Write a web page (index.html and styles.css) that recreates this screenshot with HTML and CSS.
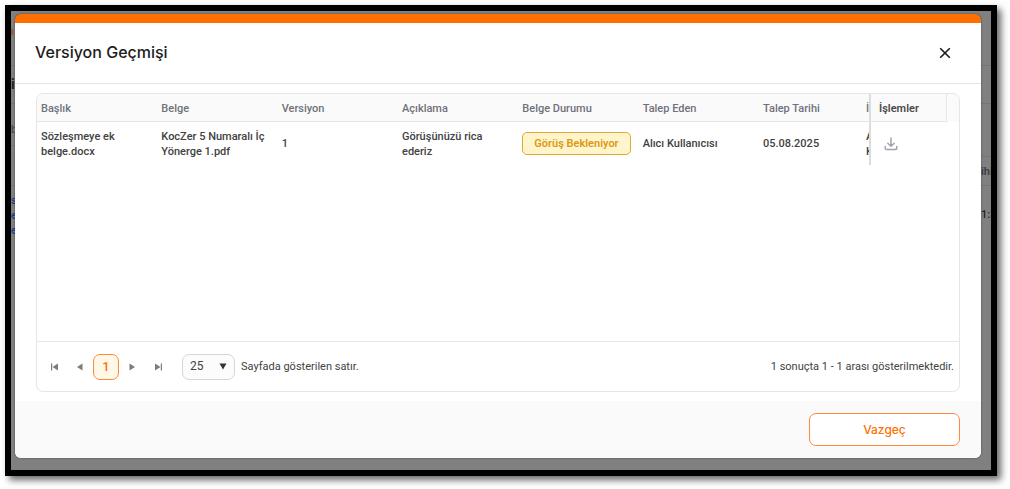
FILE: index.html
```html
<!DOCTYPE html>
<html lang="tr">
<head>
<meta charset="utf-8">
<title>Versiyon Geçmişi</title>
<link rel="stylesheet" href="styles.css">
</head>
<body>
<div class="frame">
  <div class="backdrop backdrop-left" aria-hidden="true">
    <span class="scrap brand">ı</span>
    <span class="scrap heading">i</span>
    <span class="scrap label">b</span>
    <span class="scrap links">s<br>e<br>e</span>
  </div>
  <div class="backdrop backdrop-right" aria-hidden="true">
    <span class="scrap column">ihi</span>
    <span class="scrap time">1:3</span>
  </div>
  <section class="modal" role="dialog" aria-labelledby="title">
    <header class="modal-head">
      <h1 id="title">Versiyon Geçmişi</h1>
      <button class="close" type="button" aria-label="Kapat">
        <svg width="12" height="12" viewBox="0 0 12 12"><path d="M1.2 1.2l9.6 9.6M10.8 1.2l-9.6 9.6" fill="none" stroke="currentColor" stroke-width="1.6"/></svg>
      </button>
    </header>
    <div class="modal-body">
      <div class="grid">
        <div class="grid-rows">
          <table>
            <colgroup>
              <col><col><col><col><col><col>
              <col class="col-date"><col class="col-cut"><col class="col-actions"><col class="col-fill">
            </colgroup>
            <thead>
              <tr>
                <th>Başlık</th><th>Belge</th><th>Versiyon</th><th>Açıklama</th><th>Belge Durumu</th><th>Talep Eden</th><th>Talep Tarihi</th>
                <th class="cut">İ</th><th class="actions">İşlemler</th><th class="fill"></th>
              </tr>
            </thead>
            <tbody>
              <tr>
                <td>Sözleşmeye ek belge.docx</td>
                <td>KocZer 5 Numaralı İç Yönerge 1.pdf</td>
                <td>1</td>
                <td>Görüşünüzü rica ederiz</td>
                <td><span class="badge">Görüş Bekleniyor</span></td>
                <td>Alıcı Kullanıcısı</td>
                <td>05.08.2025</td>
                <td class="cut">A<br>K</td>
                <td class="actions">
                  <button class="download" type="button" aria-label="İndir">
                    <svg width="14" height="14" viewBox="0 0 14 14" fill="none" stroke="currentColor" stroke-width="1.5" stroke-linecap="round" stroke-linejoin="round"><path d="M7 1v8M3.8 6.2L7 9.2l3.200-3M1.200 9.500v1.500q0 1.500 1.500 1.500h8.600q1.500 0 1.500-1.500V9.500"/></svg>
                  </button>
                </td>
                <td></td>
              </tr>
            </tbody>
          </table>
        </div>
        <div class="pager">
          <nav class="pages" aria-label="Sayfalar">
            <button type="button" aria-label="İlk sayfa"><svg width="7" height="8" viewBox="0 0 7 8"><path d="M0 .5h1.200v7H0zM7 .5v7L1.500 4z" fill="currentColor"/></svg></button>
            <button type="button" aria-label="Önceki sayfa"><svg width="6" height="8" viewBox="0 0 6 8"><path d="M5.500 .5v7L0 4z" fill="currentColor"/></svg></button>
            <button class="current" type="button">1</button>
            <button type="button" aria-label="Sonraki sayfa"><svg width="6" height="8" viewBox="0 0 6 8"><path d="M.5 .5v7L6 4z" fill="currentColor"/></svg></button>
            <button type="button" aria-label="Son sayfa"><svg width="7" height="8" viewBox="0 0 7 8"><path d="M5.800 .5H7v7H5.800zM0 .5v7L5.500 4z" fill="currentColor"/></svg></button>
          </nav>
          <div class="size">
            <span class="select">
              <select id="size"><option>25</option></select>
              <svg width="8" height="7" viewBox="0 0 8 7"><path d="M.5 .5h7L4 6.500z" fill="currentColor"/></svg>
            </span>
            <label for="size">Sayfada gösterilen satır.</label>
          </div>
          <p class="summary">1 sonuçta 1 - 1 arası gösterilmektedir.</p>
        </div>
      </div>
    </div>
    <footer class="modal-foot">
      <button class="cancel" type="button">Vazgeç</button>
    </footer>
  </section>
</div>
</body>
</html>
```
FILE: styles.css
```css
* {
  box-sizing: border-box;
}

body {
  margin: 0;
  min-height: 100vh;
  display: flex;
  padding: 5px 13px 13px 5px;
  background: #fff;
  color: #424242;
  font: 500 11px/15px Roboto, "Liberation Sans", sans-serif;
}

button,
select {
  font: inherit;
  color: inherit;
  border: 0;
  padding: 0;
  background: none;
  appearance: none;
}

svg {
  display: block;
}

.frame {
  position: relative;
  flex: 1;
  min-width: 0;
  display: flex;
  padding: 3px 10px 12px 4px;
  border: 6px solid #000;
  background: #808080;
  box-shadow: 4px 4px 7px rgba(0, 0, 0, .6);
}

/* Page content that shows past the edges of the dialog */
.backdrop {
  position: absolute;
  top: 0;
  bottom: 0;
  overflow: hidden;
}

.backdrop-left {
  left: 0;
  width: 8px;
  background: linear-gradient(#747474, #747474) 0 54px / 100% 1px no-repeat,
    linear-gradient(#747474, #747474) 0 92px / 100% 1px no-repeat,
    linear-gradient(#747474, #747474) 0 134px / 100% 1px no-repeat,
    linear-gradient(#747474, #747474) 0 174px / 100% 1px no-repeat;
}

.backdrop-right {
  right: 0;
  width: 10px;
  background: linear-gradient(#747474, #747474) 0 54px / 100% 1px no-repeat,
    linear-gradient(#747474, #747474) 0 92px / 100% 1px no-repeat,
    linear-gradient(#747474, #747474) 0 145px / 100% 1px no-repeat,
    linear-gradient(#747474, #747474) 0 174px / 100% 1px no-repeat;
}

.scrap {
  position: absolute;
  left: 0;
}

.brand {
  top: 13px;
  color: #9c4a14;
}

.heading {
  top: 66px;
  font-size: 14px;
  font-weight: 600;
  color: #1c1c1c;
}

.label {
  top: 111px;
  color: #4c4f58;
}

.links {
  top: 182px;
  color: #243a8c;
}

.column {
  top: 153px;
  font-weight: 600;
  color: #3a3d48;
}

.time {
  top: 196px;
  color: #222;
}

.modal {
  position: relative;
  flex: 1;
  min-width: 0;
  display: flex;
  flex-direction: column;
  overflow: hidden;
  border-top: 9px solid #ff6f00;
  border-radius: 6px;
  background: #fff;
  box-shadow: 0 0 2px rgba(0, 0, 0, .5);
}

.modal-head {
  display: flex;
  align-items: center;
  justify-content: space-between;
  height: 61px;
  padding: 0 30px 2px 20px;
  border-bottom: 1px solid #e6e6e6;
}

.modal-head h1 {
  margin: 0;
  font-family: Inter, "Liberation Sans", sans-serif;
  font-size: 16px;
  line-height: 24px;
  font-weight: 500;
  color: #1c1c1c;
}

.close {
  padding-top: 2px;
  color: #1a1a1a;
}

.modal-body {
  flex: 1;
  display: flex;
  padding: 9px 21px;
}

.grid {
  flex: 1;
  min-width: 0;
  display: flex;
  flex-direction: column;
  overflow: hidden;
  border: 1px solid #e6e6e6;
  border-radius: 7px;
}

.grid-rows {
  flex: 1;
}

table {
  width: 100%;
  table-layout: fixed;
  border-collapse: separate;
  border-spacing: 0;
}

.col-date {
  width: 103px;
}

.col-cut {
  width: 7px;
}

.col-actions {
  width: 78px;
}

.col-fill {
  width: 12px;
}

th,
td {
  padding: 0 4px;
  text-align: left;
  vertical-align: middle;
}

th {
  height: 28px;
  padding-top: 1px;
  border-bottom: 1px solid #e6e6e6;
  background: #fafafa;
  font-weight: 500;
  color: #70717a;
  white-space: nowrap;
}

td {
  height: 43px;
}

.cut {
  overflow: hidden;
  padding-right: 0;
}

.actions {
  padding-left: 8px;
  border-left: 2px solid #dcdcdf;
}

th.actions {
  border-right: 1px solid #e6e6e6;
  font-weight: 600;
  color: #4a4a4a;
}

th.fill {
  border-bottom-color: #fafafa;
}

.badge {
  display: inline-block;
  padding: 3px 11px;
  border: 1px solid #e0a82e;
  border-radius: 5px;
  background: #fff5cc;
  color: #dc9a10;
  font-weight: 600;
  white-space: nowrap;
}

.download {
  display: block;
  margin-left: 5px;
  color: #9da3b0;
}

.pager {
  display: flex;
  align-items: center;
  height: 50px;
  padding: 0 5px 0 4px;
  border-top: 1px solid #e6e6e6;
}

.pages {
  display: flex;
}

.pages button {
  display: flex;
  align-items: center;
  justify-content: center;
  width: 26px;
  height: 26px;
  color: #7c7c7c;
}

.pages .current {
  border: 1px solid #ff8a34;
  border-radius: 7px;
  background: #fff7e8;
  color: #ff6f00;
  font-size: 13px;
}

.size {
  display: flex;
  align-items: center;
  gap: 6px;
  margin-left: 11px;
  font-weight: 400;
}

.select {
  display: grid;
  align-items: center;
  width: 53px;
  height: 26px;
  border: 1px solid #d6d6d6;
  border-radius: 7px;
  background: #fcfcfc;
}

.select select,
.select svg {
  grid-area: 1 / 1;
}

.select select {
  width: 100%;
  height: 100%;
  padding-left: 7px;
  font-size: 12px;
}

.select svg {
  justify-self: end;
  margin-right: 7px;
  color: #333;
  pointer-events: none;
}

.summary {
  margin: 0 0 0 auto;
  font-weight: 400;
}

.modal-foot {
  display: flex;
  justify-content: flex-end;
  padding: 12px 21px;
  background: #fafafa;
}

.cancel {
  width: 151px;
  height: 33px;
  border: 1px solid #ff8a3c;
  border-radius: 7px;
  background: #fff;
  color: #ff6f00;
  font-family: Inter, "Liberation Sans", sans-serif;
  font-size: 12px;
}
```
